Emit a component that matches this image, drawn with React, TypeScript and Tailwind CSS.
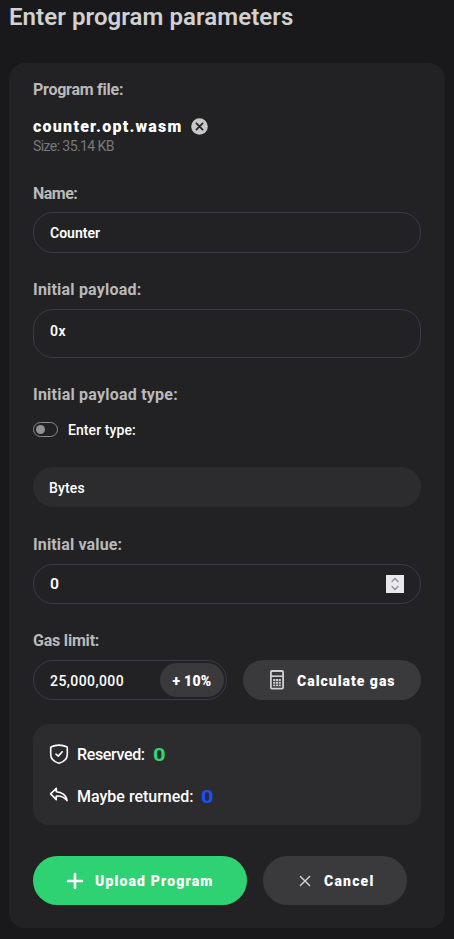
import type { ReactNode } from "react";

function Label({ children, className = "" }: { children: ReactNode; className?: string }) {
  return (
    <div className={`h-5 whitespace-nowrap text-base leading-5 font-bold text-[#b9b9ba] ${className}`}>
      {children}
    </div>
  );
}

function CalculatorIcon() {
  return (
    <svg width="14" height="20" viewBox="0 0 14 20" fill="none" stroke="#d0d0d0">
      <rect x="0.9" y="1" width="12.2" height="17.6" rx="1" strokeWidth="1.8" />
      <path d="M1 6.2h12" strokeWidth="1.6" />
      <path d="M3.2 10h7.6M3.2 12.7h7.6M3.2 15.4h7.6" strokeWidth="1.9" strokeDasharray="2.1 0.65" />
    </svg>
  );
}

export default function App() {
  return (
    <main className="h-[939px] w-full overflow-hidden bg-[#19191b] px-[9px] pt-px font-['Roboto','Liberation_Sans',sans-serif] text-white">
      <h1 className="h-[62px] whitespace-nowrap text-2xl leading-[32px] font-semibold tracking-[0.07px] text-[#d1d1d1]">
        Enter program parameters
      </h1>

      <form className="flex h-[865px] w-[436px] flex-col rounded-[16px] bg-[#222224] px-6 pt-[17px]">
        <Label className="tracking-[-0.25px]">Program file:</Label>
        <div className="mt-[17px] flex h-5 items-center gap-2">
          <span className="w-[150px] whitespace-nowrap text-base leading-5 font-black tracking-[1.25px]">counter.opt.wasm</span>
          <svg className="-mt-[2px]" width="17" height="17" viewBox="0 0 17 17">
            <circle cx="8.5" cy="8.5" r="8.3" fill="#c8c8c9" />
            <path d="M5.4 5.4l6.2 6.2M11.6 5.4l-6.2 6.2" stroke="#222224" strokeWidth="1.7" strokeLinecap="round" />
          </svg>
        </div>
        <div className="h-[18px] whitespace-nowrap text-sm leading-[18px] tracking-[-0.58px] text-[#78787a]">Size: 35.14 KB</div>

        <Label className="mt-[29px] tracking-[-0.5px]">Name:</Label>
        <div className="mt-2 flex h-[41px] shrink-0 items-center rounded-[20px] border border-[#39394f] px-4 pt-px text-sm font-semibold">
          Counter
        </div>

        <Label className="mt-[27px] tracking-[0.2px]">Initial payload:</Label>
        <div className="mt-[9px] h-[49px] shrink-0 rounded-[20px] border border-[#39394f] px-4 pt-[11px] text-sm leading-5 font-semibold tracking-[0.6px]">
          0x
        </div>

        <Label className="mt-[27px] tracking-[0.22px]">Initial payload type:</Label>
        <div className="mt-[14px] flex h-5 items-center">
          <span className="flex h-[15px] w-[25px] items-center rounded-full border border-[#8b8b8d] pl-[2px]">
            <span className="size-[9px] rounded-full bg-[#929293]" />
          </span>
          <span className="ml-[10px] pt-px whitespace-nowrap text-sm leading-5 font-medium tracking-[0.08px]">Enter type:</span>
        </div>
        <div className="mt-7 flex h-10 shrink-0 items-center rounded-[20px] bg-[#2c2c2e] px-4 pt-px text-sm font-medium tracking-[0.15px]">
          Bytes
        </div>

        <Label className="mt-7 tracking-[0.14px]">Initial value:</Label>
        <div className="mt-[9px] flex h-10 shrink-0 items-center justify-between rounded-[20px] border border-[#39394f] px-4 text-sm font-semibold">
          <span className="origin-left scale-x-[1.12]">0</span>
          <span className="flex h-[18px] w-[18px] items-center justify-center bg-[#e9e9ed]">
            <svg width="10" height="14" viewBox="0 0 10 14" fill="none" stroke="#8f8f9d" strokeWidth="1.4" strokeLinecap="round">
              <path d="M2 4.5l3-3 3 3M2 9.5l3 3 3-3" />
            </svg>
          </span>
        </div>

        <Label className="mt-[27px] tracking-[-0.2px]">Gas limit:</Label>
        <div className="mt-[9px] flex h-10 shrink-0 gap-4">
          <div className="flex h-10 w-[194px] items-center justify-between rounded-[20px] border border-[#39394f] pr-[2px] pl-4 text-sm font-medium">
            <span className="pt-px tracking-[0.42px]">25,000,000</span>
            <span className="flex h-[34px] w-16 items-center justify-center rounded-full bg-[#3a3a3c] pt-px font-black tracking-[0.3px]">
              + 10%
            </span>
          </div>
          <div className="flex w-[178px] items-center rounded-[20px] bg-[#3a3a3c] pl-[27px]">
            <CalculatorIcon />
            <span className="ml-[13px] whitespace-nowrap pt-px text-sm leading-5 font-black tracking-[1px]">Calculate gas</span>
          </div>
        </div>

        <div className="mt-6 h-[101px] shrink-0 rounded-[16px] bg-[#2c2c2e] px-4 pt-[18px] text-base leading-6 font-medium">
          <div className="flex h-6 items-center whitespace-nowrap">
            <svg width="20" height="20" viewBox="0 0 20 20" fill="none" stroke="#fff" strokeWidth="1.6" strokeLinecap="round" strokeLinejoin="round">
              <path d="M10 1.1C12.7 1.1 15.6 1.8 17.6 2.8Q18.3 3.2 18.3 4V10.2C18.3 14.8 14.2 18 10 19.2C5.8 18 1.7 14.8 1.7 10.2V4Q1.7 3.2 2.4 2.8C4.4 1.8 7.3 1.1 10 1.1Z" />
              <path d="M7 10.2L9.3 12.1L13.2 7.8" />
            </svg>
            <span className="ml-2 w-[76px] pt-px tracking-[-0.35px]">Reserved:</span>
            <span className="origin-left scale-x-[1.22] pt-px text-lg font-bold text-[#2ed573]">0</span>
          </div>
          <div className="mt-[18px] flex h-6 items-center whitespace-nowrap">
            <svg width="20" height="20" viewBox="0 0 20 20" fill="none" stroke="#fff" strokeWidth="1.6" strokeLinecap="round" strokeLinejoin="round">
              <path d="M7.3 2.4L1.6 7.9L7.3 13.6V10.1C11.8 9.8 15.3 11.2 18 14.6C17.4 8.9 12.5 5.9 7.3 5.7Z" />
            </svg>
            <span className="ml-2 w-[124px] pt-px">Maybe returned:</span>
            <span className="origin-left scale-x-[1.22] pt-px text-lg font-bold text-[#1850ff]">0</span>
          </div>
        </div>

        <div className="mt-[31px] flex h-[49px] shrink-0 gap-4">
          <div className="flex w-[214px] items-center rounded-full bg-[#2ed272] pl-[33px]">
            <svg width="18" height="18" viewBox="0 0 18 18" stroke="#fff" strokeWidth="2.6" strokeLinecap="round">
              <path d="M9 2v14M2 9h14" />
            </svg>
            <span className="ml-[11px] whitespace-nowrap pt-px text-sm font-black tracking-[1.15px]">Upload Program</span>
          </div>
          <div className="flex w-36 items-center rounded-full bg-[#3a3a3c] pl-9">
            <svg width="12" height="12" viewBox="0 0 12 12" stroke="#d3d3d3" strokeWidth="1.4" strokeLinecap="round">
              <path d="M1.4 1.4l9.2 9.2M10.6 1.4l-9.2 9.2" />
            </svg>
            <span className="ml-[13px] whitespace-nowrap pt-px text-sm font-black tracking-[1.2px]">Cancel</span>
          </div>
        </div>
      </form>
    </main>
  );
}
